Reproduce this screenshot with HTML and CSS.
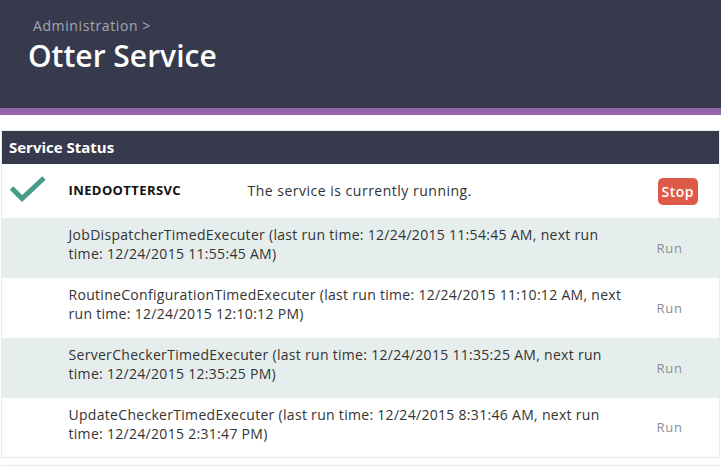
FILE: index.html
```html
<!DOCTYPE html>
<html>
<head>
<meta charset="utf-8">
<link rel="stylesheet" href="styles.css">
</head>
<body>
<header class="page-header">
  <div class="crumb">Administration &gt;</div>
  <h1 class="title">Otter Service</h1>
</header>
<div class="accent"></div>
<main class="content">
  <table class="status">
    <colgroup>
      <col class="w-icon">
      <col class="w-name">
      <col class="w-msg">
      <col class="w-act">
    </colgroup>
    <thead>
      <tr><th colspan="4">Service Status</th></tr>
    </thead>
    <tbody>
      <tr class="svc">
        <td class="c-icon">
          <svg width="36" height="28" viewBox="0 0 36 28"><path d="M1.5 12 L12 22.5 L34 2" fill="none" stroke="#4a9a8a" stroke-width="5"/></svg>
        </td>
        <td class="c-name">INEDOOTTERSVC</td>
        <td class="c-msg">The service is currently running.</td>
        <td class="c-act"><button class="stop">Stop</button></td>
      </tr>
      <tr class="alt">
        <td></td>
        <td colspan="2" class="c-exec">JobDispatcherTimedExecuter (last run time: 12/24/2015 11:54:45 AM, next run time: 12/24/2015 11:55:45 AM)</td>
        <td class="c-act"><a class="run">Run</a></td>
      </tr>
      <tr>
        <td></td>
        <td colspan="2" class="c-exec">RoutineConfigurationTimedExecuter (last run time: 12/24/2015 11:10:12 AM, next run time: 12/24/2015 12:10:12 PM)</td>
        <td class="c-act"><a class="run">Run</a></td>
      </tr>
      <tr class="alt">
        <td></td>
        <td colspan="2" class="c-exec">ServerCheckerTimedExecuter (last run time: 12/24/2015 11:35:25 AM, next run time: 12/24/2015 12:35:25 PM)</td>
        <td class="c-act"><a class="run">Run</a></td>
      </tr>
      <tr>
        <td></td>
        <td colspan="2" class="c-exec">UpdateCheckerTimedExecuter (last run time: 12/24/2015 8:31:46 AM, next run time: 12/24/2015 2:31:47 PM)</td>
        <td class="c-act"><a class="run">Run</a></td>
      </tr>
    </tbody>
  </table>
  <div class="next-box"></div>
</main>
</body>
</html>
```
FILE: styles.css
```css
html, body {
  margin: 0;
  padding: 0;
  background: #ffffff;
  font-family: "Open Sans", "Liberation Sans", sans-serif;
  color: #333333;
}
.page-header {
  background: #373a4d;
  height: 108px;
  box-sizing: border-box;
  padding: 16px 0 0 28px;
}
.crumb {
  color: #a3a6b3;
  font-size: 14px;
  line-height: 20px;
  padding-left: 5px;
  letter-spacing: 0.6px;
}
.title {
  margin: 0;
  color: #ffffff;
  font-size: 30px;
  font-weight: 600;
  line-height: 40px;
}
.accent {
  height: 7px;
  background: #9565ab;
}
.content {
  padding: 15px 1px 0 1px;
}
.status {
  width: 100%;
  border-collapse: collapse;
  border: 1px solid #e3ecec;
  table-layout: fixed;
}
.w-icon { width: 60px; }
.w-name { width: 179px; }
.w-act { width: 70px; }
.status th {
  background: #373a4d;
  color: #ffffff;
  text-align: left;
  font-size: 15px;
  font-weight: 700;
  height: 33px;
  padding: 0 7px 1px;
  box-sizing: border-box;
}
.status td {
  box-sizing: border-box;
  font-size: 14px;
  line-height: 19px;
  vertical-align: middle;
  padding: 0 7px;
  letter-spacing: 0.3px;
}
.status tr.svc td { height: 54px; }
.status tbody tr:not(.svc) td { height: 60px; }
.status td.c-exec { vertical-align: top; padding: 7px 19px 0 7px; }
.status td.c-msg { letter-spacing: 0.5px; }
.status tr.alt td { background: #e5eeec; }
.c-icon svg { display: block; margin-left: 1px; margin-top: -1px; }
.c-name { font-weight: 700; color: #111; }
.status td.c-name { font-size: 13px; letter-spacing: 0.4px; }
.stop {
  background: #e05a4a;
  color: #ffffff;
  border: none;
  border-radius: 5px;
  font-family: inherit;
  font-size: 14px;
  font-weight: 600;
  letter-spacing: 0.5px;
  height: 27px;
  padding: 0 4px;
  margin-top: 2px;
  margin-left: 1px;
}
.run {
  color: #8a8f9a;
  font-size: 13px;
  letter-spacing: 0.8px;
}
.next-box {
  margin-top: 7px;
  border-top: 1px solid #e3ecec;
  height: 10px;
}
```
